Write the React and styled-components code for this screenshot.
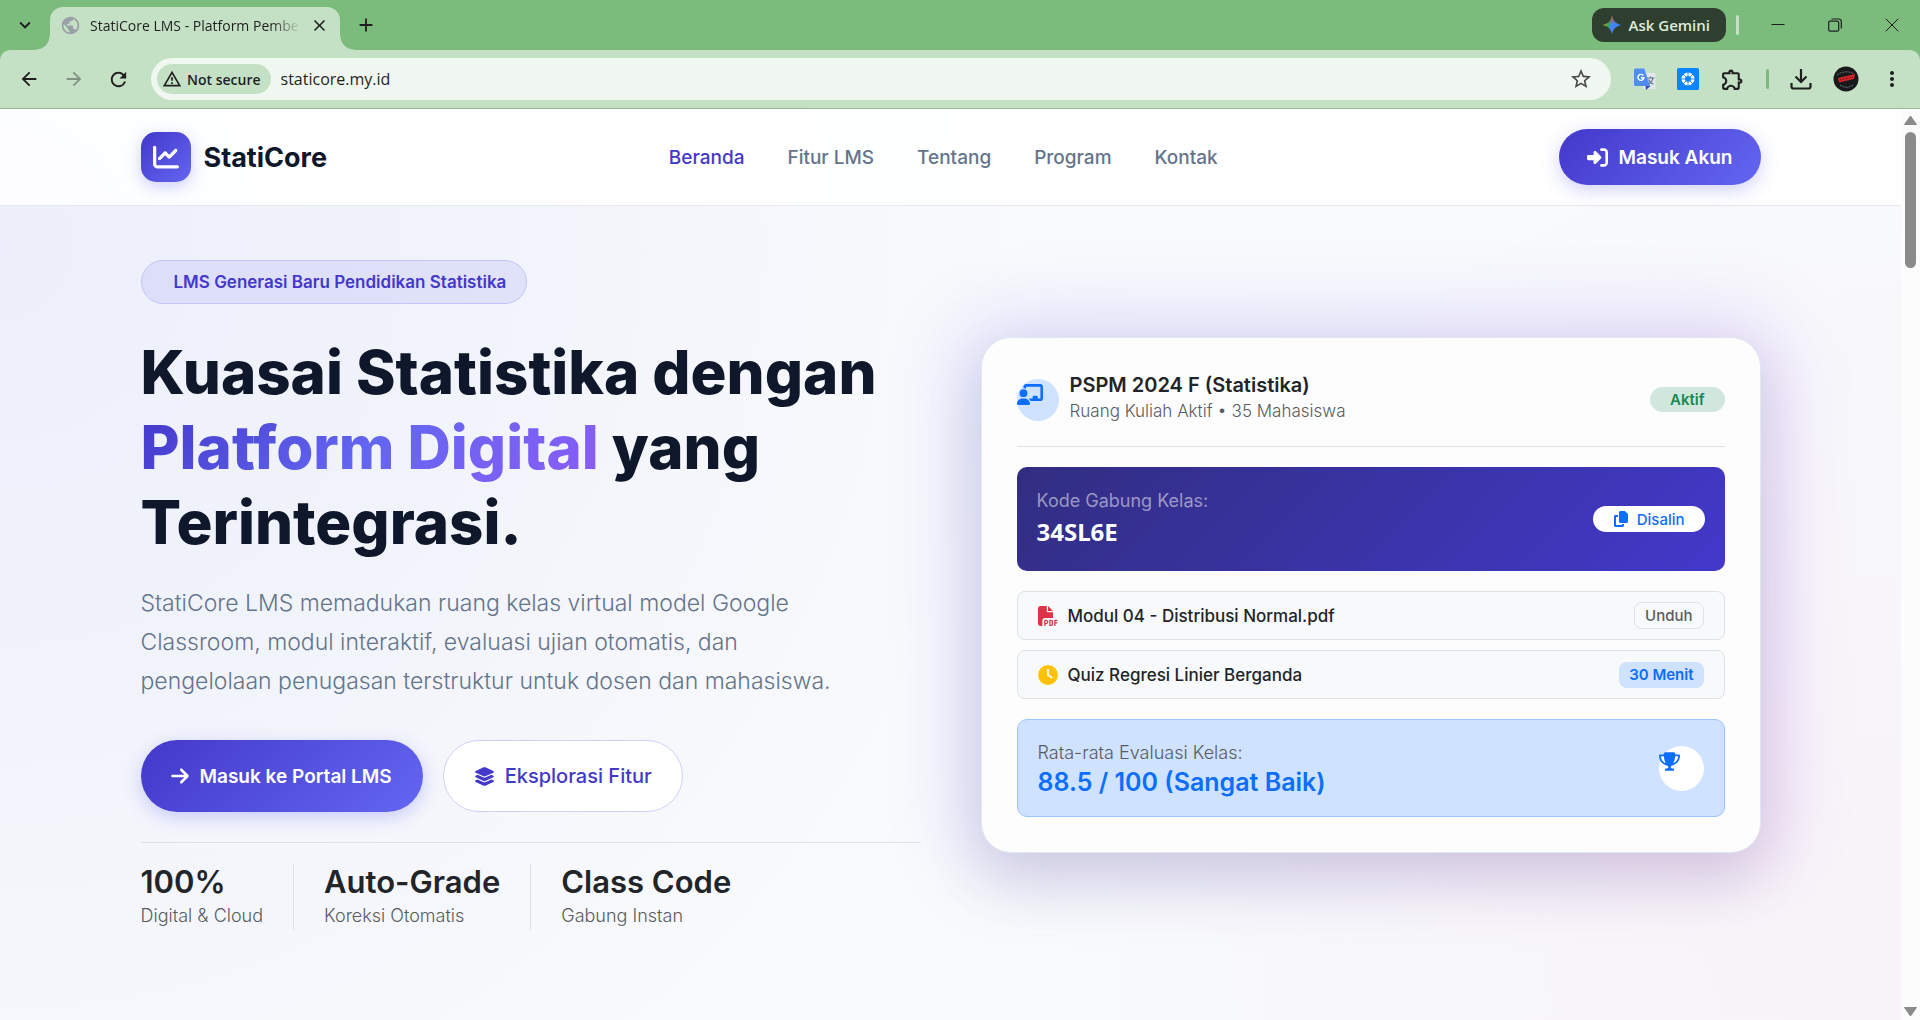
import React from 'react';
import styled, { createGlobalStyle } from 'styled-components';
import {
  FaChartLine,
  FaRightToBracket,
  FaArrowRight,
  FaLayerGroup,
  FaCopy,
  FaChalkboardUser,
  FaFilePdf,
  FaClock,
  FaTrophy,
} from 'react-icons/fa6';
import {
  MdPublic,
  MdClose,
  MdAdd,
  MdArrowBack,
  MdArrowForward,
  MdRefresh,
  MdStarBorder,
  MdMoreVert,
  MdOutlineWarningAmber,
  MdKeyboardArrowDown,
  MdOutlineExtension,
} from 'react-icons/md';

const menus = ['Beranda', 'Fitur LMS', 'Tentang', 'Program', 'Kontak'];

const stats = [
  { value: '100%', label: 'Digital & Cloud' },
  { value: 'Auto-Grade', label: 'Koreksi Otomatis' },
  { value: 'Class Code', label: 'Gabung Instan' },
];

const BrowserBar = () => {
  return (
    <Browser>
      <TabStrip>
        <TabSearch aria-label="Cari tab"><MdKeyboardArrowDown size={22} /></TabSearch>
        <Tab>
          <MdPublic size={21} color="#9aa0a6" />
          <TabTitle>StatiCore LMS - Platform Pembe</TabTitle>
          <TabClose aria-label="Tutup tab"><MdClose size={19} /></TabClose>
        </Tab>
        <NewTab aria-label="Tab baru"><MdAdd size={22} /></NewTab>
        <WindowTools>
          <Gemini>
            <GeminiIcon />
            Ask Gemini
          </Gemini>
          <Divider $color="#c5e1c5" />
          <WindowButtons>
            <WindowButton aria-label="Minimize">
              <svg width="14" height="14" viewBox="0 0 14 14" stroke="#1f1f1f"><path d="M.5 6.5h13" /></svg>
            </WindowButton>
            <WindowButton aria-label="Restore">
              <svg width="14" height="14" viewBox="0 0 14 14" fill="none" stroke="#1f1f1f" strokeWidth="1.2">
                <rect x=".7" y="3.2" width="10" height="10" rx="1.5" />
                <path d="M3.5 1h7.2a2.6 2.6 0 0 1 2.6 2.6v7" />
              </svg>
            </WindowButton>
            <WindowButton aria-label="Close">
              <svg width="14" height="14" viewBox="0 0 14 14" stroke="#1f1f1f"><path d="M.7.7l12.6 12.6M13.3.7L.7 13.3" /></svg>
            </WindowButton>
          </WindowButtons>
        </WindowTools>
      </TabStrip>

      <Toolbar>
        <ToolButton aria-label="Kembali"><MdArrowBack size={22} /></ToolButton>
        <ToolButton aria-label="Maju" $off><MdArrowForward size={22} /></ToolButton>
        <ToolButton aria-label="Muat ulang"><MdRefresh size={23} /></ToolButton>
        <AddressBar>
          <Security><MdOutlineWarningAmber size={20} />Not secure</Security>
          <Address aria-label="Alamat" defaultValue="staticore.my.id" />
          <BareButton aria-label="Bookmark"><MdStarBorder size={24} color="#474747" /></BareButton>
        </AddressBar>
        <Extensions>
          <BareButton aria-label="Translate"><TranslateIcon /></BareButton>
          <BareButton aria-label="Shutter"><ShutterIcon /></BareButton>
          <BareButton aria-label="Ekstensi"><MdOutlineExtension size={25} /></BareButton>
          <Divider $color="#7bbb7c" />
          <BareButton aria-label="Download">
            <svg width="22" height="22" viewBox="0 0 22 22" fill="none" stroke="#1f1f1f" strokeWidth="2.2">
              <path d="M11 1v12.500M5.500 8.500l5.500 5.500 5.500-5.500M1.500 15v3.500a2 2 0 0 0 2 2h15a2 2 0 0 0 2-2V15" />
            </svg>
          </BareButton>
          <BareButton aria-label="Profil"><AvatarIcon /></BareButton>
          <BareButton aria-label="Menu"><MdMoreVert size={24} /></BareButton>
        </Extensions>
      </Toolbar>
    </Browser>
  );
};

const GeminiIcon = () => (
  <svg width="20" height="20" viewBox="0 0 20 20">
    <defs>
      <linearGradient id="gem" x1="0" y1=".3" x2="1" y2=".6">
        <stop offset="0" stopColor="#fbbc04" />
        <stop offset=".32" stopColor="#34a853" />
        <stop offset=".5" stopColor="#4285f4" />
        <stop offset="1" stopColor="#3b82f6" />
      </linearGradient>
      <linearGradient id="gemTop" x1="0" y1="0" x2="0" y2="1">
        <stop offset="0" stopColor="#ea4335" />
        <stop offset=".45" stopColor="#ea4335" stopOpacity="0" />
      </linearGradient>
    </defs>
    <path d="M10 .5c1 5.500 4 8.500 9.500 9.500-5.500 1-8.500 4-9.500 9.500C9 14 6 11 .5 10 6 9 9 6 10 .5z" fill="url(#gem)" />
    <path d="M10 .5c1 5.500 4 8.500 9.500 9.500-5.500 1-8.500 4-9.500 9.500C9 14 6 11 .5 10 6 9 9 6 10 .5z" fill="url(#gemTop)" />
  </svg>
);

const TranslateIcon = () => (
  <svg width="22" height="22" viewBox="0 0 22 22" fill="none">
    <rect x="9" y="5" width="12.500" height="16" rx="1.500" fill="#e3e6ea" />
    <path d="M13 10h7.500M16.700 8.500V10M19 10c-.6 3-2.500 5-5 6.300M14.500 11.500c.8 2 2.500 3.800 5 4.800" stroke="#5f7186" strokeWidth="1.200" />
    <path d="M11.500 18h5l-4.500 4z" fill="#3a49b8" />
    <path d="M1.500.5h8.800L16 18H1.500A1.500 1.500 0 0 1 0 16.500V2A1.500 1.500 0 0 1 1.500.5z" fill="#4f8df5" />
    <path d="M9.300 7.500A3 3 0 1 0 9.900 9.700H7" stroke="#fff" strokeWidth="1.400" />
  </svg>
);

const ShutterIcon = () => (
  <svg width="22" height="22" viewBox="0 0 22 22">
    <rect width="22" height="22" rx="1.500" fill="#0a84ff" />
    <circle cx="11" cy="11" r="6.500" fill="#fff" />
    <path
      d="M11 4v4M11 14v4M4 11h4M14 11h4M6 6l3 3M13 13l3 3M6 16l3-3M13 9l3-3"
      stroke="#0a84ff"
      strokeWidth=".9"
    />
    <circle cx="11" cy="11" r="3" fill="#0a84ff" />
  </svg>
);

const AvatarIcon = () => (
  <svg width="26" height="26" viewBox="0 0 26 26">
    <circle cx="13" cy="13" r="12.500" fill="#17191b" />
    <path d="M4 9c5-4 13-4 17-1M7 19c4 3 9 3 13 0" stroke="#6e7275" fill="none" strokeDasharray="2 1" />
    <path d="M5 12l17-4-1 5-15 3.500z" fill="#d3262b" />
    <path d="M7 14l13-3" stroke="#7d1417" strokeDasharray="2 1" />
  </svg>
);

const Header = () => {
  return (
    <HeaderWrap>
      <HeaderInner>
        <Brand href="#beranda">
          <Logo><FaChartLine size={26} /></Logo>
          StatiCore
        </Brand>
        <Nav>
          {menus.map((menu, i) => (
            <NavLink key={menu} href={'#' + menu} $active={i === 0}>{menu}</NavLink>
          ))}
        </Nav>
        <LoginButton>
          <FaRightToBracket size={21} />
          Masuk Akun
        </LoginButton>
      </HeaderInner>
    </HeaderWrap>
  );
};

const Intro = () => {
  return (
    <IntroWrap>
      <Pill>LMS Generasi Baru Pendidikan Statistika</Pill>
      <Title>
        Kuasai Statistika dengan<br />
        <em>Platform Digital</em> yang<br />
        Terintegrasi.
      </Title>
      <Lead>
        StatiCore LMS memadukan ruang kelas virtual model Google<br />
        Classroom, modul interaktif, evaluasi ujian otomatis, dan<br />
        pengelolaan penugasan terstruktur untuk dosen dan mahasiswa.
      </Lead>
      <Actions>
        <PortalButton><FaArrowRight size={20} />Masuk ke Portal LMS</PortalButton>
        <FeatureButton><FaLayerGroup size={21} />Eksplorasi Fitur</FeatureButton>
      </Actions>
      <Stats>
        {stats.map((stat) => (
          <Stat key={stat.label}>
            <strong>{stat.value}</strong>
            <span>{stat.label}</span>
          </Stat>
        ))}
      </Stats>
    </IntroWrap>
  );
};

const ClassCard = () => {
  return (
    <CardArea>
      <Glow />
      <Card>
        <CardHead>
          <RoomIcon><FaChalkboardUser size={21} /></RoomIcon>
          <RoomInfo>
            <h2>PSPM 2024 F (Statistika)</h2>
            <p>Ruang Kuliah Aktif • 35 Mahasiswa</p>
          </RoomInfo>
          <StatusBadge>Aktif</StatusBadge>
        </CardHead>

        <CodeBox>
          <div>
            <p>Kode Gabung Kelas:</p>
            <Code>34SL6E</Code>
          </div>
          <CopyButton><FaCopy size={16} />Disalin</CopyButton>
        </CodeBox>

        <Files>
          <FileRow>
            <FaFilePdf size={20} color="#dc3545" />
            <span>Modul 04 - Distribusi Normal.pdf</span>
            <DownloadButton>Unduh</DownloadButton>
          </FileRow>
          <FileRow>
            <FaClock size={20} color="#ffc107" />
            <span>Quiz Regresi Linier Berganda</span>
            <TimeBadge>30 Menit</TimeBadge>
          </FileRow>
        </Files>

        <ScoreBox>
          <div>
            <p>Rata-rata Evaluasi Kelas:</p>
            <strong>88.5 / 100 (Sangat Baik)</strong>
          </div>
          <TrophyIcon><FaTrophy size={21} /></TrophyIcon>
        </ScoreBox>
      </Card>
    </CardArea>
  );
};

const App = () => {
  return (
    <>
      <GlobalStyle />
      <Screen>
        <BrowserBar />
        <Viewport>
          <Page>
            <Header />
            <Hero>
              <Intro />
              <ClassCard />
            </Hero>
          </Page>
          <ScrollBar>
            <svg width="13" height="11" viewBox="0 0 13 11"><path d="M6.500 1l6 8.500H.5z" fill="#8b8b8b" stroke="#8b8b8b" strokeLinejoin="round" /></svg>
            <Thumb />
            <svg width="13" height="11" viewBox="0 0 13 11"><path d="M6.500 10l6-8.500H.5z" fill="#8b8b8b" stroke="#8b8b8b" strokeLinejoin="round" /></svg>
          </ScrollBar>
        </Viewport>
      </Screen>
    </>
  );
};

const GlobalStyle = createGlobalStyle`
  *{
    box-sizing: border-box;
  }
  body{
    margin: 0;
    color: #212529;
    font-family: Inter, "Liberation Sans", sans-serif;
  }
  button{
    font-family: inherit;
    border: 0;
    cursor: pointer;
  }
  h1, h2, p{
    margin: 0;
  }
  svg{
    flex: none;
  }
`;

const Screen = styled.div`
  display: flex;
  flex-direction: column;
  height: 100vh;
  overflow: hidden;
`;

/* browser */
const Browser = styled.header`
  background-color: #7bbb7c;
  color: #1f1f1f;
  font-family: "Open Sans", "Noto Sans", sans-serif;
  border-bottom: 1px solid #9db89d;
`;

const TabStrip = styled.div`
  display: flex;
  align-items: center;
  height: 50px;
`;

const BareButton = styled.button`
  display: flex;
  align-items: center;
  justify-content: center;
  padding: 0;
  background: none;
  color: inherit;
`;

const TabSearch = styled(BareButton)`
  width: 50px;
`;

const Tab = styled.div`
  position: relative;
  display: flex;
  align-items: center;
  align-self: flex-end;
  gap: 9px;
  width: 290px;
  height: 43px;
  padding: 0 11px 6px 10px;
  border-radius: 13px 13px 0 0;
  background-color: #c5e1c5;

  /* flared feet of the tab */
  &::before, &::after{
    content: "";
    position: absolute;
    bottom: 0;
    width: 14px;
    height: 14px;
  }
  &::before{
    right: 100%;
    background: radial-gradient(circle at 0 0, transparent 13px, #c5e1c5 14px);
  }
  &::after{
    left: 100%;
    background: radial-gradient(circle at 100% 0, transparent 13px, #c5e1c5 14px);
  }
`;

const TabTitle = styled.span`
  flex: 1;
  white-space: nowrap;
  font-size: 14px;
  mask-image: linear-gradient(90deg, #000 86%, transparent);
`;

const TabClose = styled(BareButton)`
  width: 19px;
`;

const NewTab = styled(BareButton)`
  width: 52px;
`;

const WindowTools = styled.div`
  display: flex;
  align-items: center;
  margin-left: auto;
`;

const Gemini = styled.button`
  display: flex;
  align-items: center;
  gap: 7px;
  height: 34px;
  margin-right: 10px;
  padding: 0 16px 0 10px;
  border-radius: 12px;
  background-color: #2f3f2f;
  color: #dcebdc;
  font-size: 15px;
  font-weight: 600;
`;

const Divider = styled.span`
  width: 3px;
  height: 20px;
  border-radius: 2px;
  background-color: ${(props) => props.$color};
`;

const WindowButtons = styled.div`
  display: flex;
  padding-left: 10px;
`;

const WindowButton = styled(BareButton)`
  width: 57px;
  height: 50px;
`;

const Toolbar = styled.div`
  display: flex;
  align-items: center;
  height: 58px;
  padding: 0 16px 0 6px;
  border-radius: 10px 10px 0 0;
  background-color: #c5e1c5;
`;

const ToolButton = styled(BareButton)`
  width: 45px;
  opacity: ${(props) => (props.$off ? 0.4 : 1)};
`;

const AddressBar = styled.div`
  display: flex;
  align-items: center;
  flex: 1;
  gap: 10px;
  height: 42px;
  margin-left: 10px;
  padding: 0 18px 0 6px;
  border-radius: 21px;
  background-color: #f0f7f0;
`;

const Security = styled.button`
  display: flex;
  align-items: center;
  gap: 5px;
  height: 30px;
  padding: 0 10px 0 5px;
  border-radius: 15px;
  background-color: #c5e1c5;
  color: #1f1f1f;
  font-size: 14px;
  font-weight: 600;
`;

const Address = styled.input`
  flex: 1;
  min-width: 0;
  padding: 0;
  border: 0;
  outline: 0;
  background: none;
  color: #1f1f1f;
  font-family: inherit;
  font-size: 16px;
`;

const Extensions = styled.div`
  display: flex;
  align-items: center;
  gap: 21px;
  padding-left: 23px;
`;

/* page */
const Viewport = styled.div`
  display: flex;
  flex: 1;
  min-height: 0;
`;

const Page = styled.div`
  flex: 1;
  min-width: 0;
  overflow: hidden;
  background:
    radial-gradient(circle at 0% 15%, rgba(99, 102, 241, 0.08), transparent 50%),
    radial-gradient(circle at 100% 90%, rgba(236, 72, 153, 0.04), transparent 40%),
    #f8fafc;
`;

const ScrollBar = styled.div`
  display: flex;
  flex-direction: column;
  align-items: center;
  width: 19px;
  padding: 6px 0 3px;
  background-color: #fcfcfc;

  svg:last-child{
    margin-top: auto;
  }
`;

const Thumb = styled.div`
  width: 11px;
  height: 136px;
  margin-top: 6px;
  border-radius: 6px;
  background-color: #8b8b8b;
`;

const HeaderWrap = styled.div`
  background-color: rgba(255, 255, 255, 0.88);
  border-bottom: 1px solid #e6e9f0;
`;

const HeaderInner = styled.div`
  display: flex;
  align-items: center;
  justify-content: space-between;
  max-width: 1620px;
  height: 96px;
  margin: 0 auto;
`;

const Brand = styled.a`
  display: flex;
  align-items: center;
  gap: 13px;
  color: #0f172a;
  font-size: 27px;
  font-weight: 700;
  text-decoration: none;
`;

const Logo = styled.span`
  display: flex;
  align-items: center;
  justify-content: center;
  width: 50px;
  height: 50px;
  border-radius: 15px;
  background: linear-gradient(135deg, #4338ca, #6366f1);
  color: white;
  box-shadow: 0 5px 15px rgba(99, 102, 241, 0.3);
`;

const Nav = styled.nav`
  display: flex;
  gap: 43px;
`;

const NavLink = styled.a`
  color: ${(props) => (props.$active ? '#4338ca' : '#64748b')};
  font-size: 19px;
  font-weight: 500;
  text-decoration: none;
`;

const PrimaryButton = styled.button`
  display: flex;
  align-items: center;
  gap: 10px;
  border-radius: 36px;
  background: linear-gradient(135deg, #4338ca, #6366f1);
  color: white;
  font-weight: 600;
  box-shadow: 0 5px 18px rgba(99, 102, 241, 0.3);
`;

const LoginButton = styled(PrimaryButton)`
  height: 56px;
  padding: 0 28px;
  font-size: 19px;
`;

const Hero = styled.main`
  display: grid;
  grid-template-columns: 1fr 1fr;
  align-items: center;
  gap: 60px;
  max-width: 1620px;
  margin: 0 auto;
  padding-top: 54px;
`;

const IntroWrap = styled.section`
  display: flex;
  flex-direction: column;
  align-items: flex-start;
`;

const Pill = styled.span`
  display: flex;
  align-items: center;
  height: 44px;
  padding: 0 20px 0 32px;
  border: 1px solid #c4c3f8;
  border-radius: 22px;
  background-color: rgba(99, 102, 241, 0.12);
  color: #4338ca;
  font-size: 17px;
  font-weight: 600;
`;

const Title = styled.h1`
  margin-top: 31px;
  color: #0f172a;
  font-size: 60px;
  font-weight: 800;
  line-height: 75px;
  white-space: nowrap;

  em{
    font-style: normal;
    background: linear-gradient(135deg, #4338ca, #6366f1 50%, #8b5cf6);
    background-clip: text;
    color: transparent;
  }
`;

const Lead = styled.p`
  margin-top: 24px;
  color: #64748b;
  font-size: 23px;
  font-weight: 300;
  line-height: 39px;
  white-space: nowrap;
`;

const Actions = styled.div`
  display: flex;
  gap: 20px;
  margin-top: 39px;
`;

const PortalButton = styled(PrimaryButton)`
  height: 72px;
  padding: 0 31px 0 29px;
  font-size: 19px;
`;

const FeatureButton = styled(PrimaryButton)`
  height: 72px;
  padding: 0 30px;
  border: 1px solid #d0d0fb;
  background: white;
  color: #4338ca;
  font-size: 20px;
  font-weight: 500;
  box-shadow: none;
`;

const Stats = styled.div`
  display: flex;
  align-self: stretch;
  margin-top: 30px;
  padding-top: 20px;
  border-top: 1px solid #dee2e6;
`;

const Stat = styled.div`
  display: flex;
  flex-direction: column;
  height: 67px;
  padding-right: 30px;

  strong{
    font-size: 31px;
    font-weight: 600;
    line-height: 38px;
  }
  span{
    color: #585c60;
    font-size: 18px;
    font-weight: 300;
    line-height: 29px;
  }
  & + &{
    padding-left: 30px;
    border-left: 1px solid #dee2e6;
  }
`;

/* class card */
const CardArea = styled.section`
  position: relative;
`;

const Glow = styled.div`
  position: absolute;
  inset: -22px;
  border-radius: 50px;
  background: linear-gradient(135deg, #6366f1, #8b5cf6 60%, #c04fe8);
  opacity: 0.19;
  filter: blur(38px);
`;

const Card = styled.div`
  position: relative;
  display: flex;
  flex-direction: column;
  gap: 20px;
  padding: 35px;
  border: 1px solid #e2e8f0;
  border-radius: 30px;
  background-color: #fdfdfe;
  box-shadow: 0 25px 60px rgba(15, 23, 42, 0.12);
`;

const CardHead = styled.div`
  display: flex;
  align-items: center;
  gap: 11px;
  padding-bottom: 20px;
  border-bottom: 1px solid #dee2e6;
`;

const RoomIcon = styled.span`
  width: 42px;
  height: 42px;
  border-radius: 50%;
  background-color: #cfe2ff;
  color: #0d6efd;

  svg{
    display: block;
    width: 26px;
    margin-top: 5px;
  }
`;

const RoomInfo = styled.div`
  flex: 1;

  h2{
    font-size: 20px;
    font-weight: 600;
    line-height: 24px;
  }
  p{
    color: #585c60;
    font-size: 17px;
    font-weight: 300;
    line-height: 29px;
  }
`;

const StatusBadge = styled.span`
  padding: 0 20px;
  border-radius: 13px;
  background-color: #d1e7dd;
  color: #198754;
  font-size: 15px;
  font-weight: 600;
  line-height: 25px;
`;

const CodeBox = styled.div`
  display: flex;
  align-items: center;
  justify-content: space-between;
  padding: 20px;
  border-radius: 10px;
  background: linear-gradient(135deg, #312e81, #4338ca);

  p{
    color: rgba(255, 255, 255, 0.5);
    font-size: 18px;
    line-height: 28px;
  }
`;

const Code = styled.code`
  display: block;
  padding-bottom: 2px;
  color: white;
  font-family: "Noto Sans", "Open Sans", sans-serif;
  font-size: 24px;
  font-weight: 700;
  line-height: 34px;
`;

const CopyButton = styled.button`
  display: flex;
  align-items: center;
  gap: 8px;
  height: 26px;
  padding: 0 20px;
  border-radius: 13px;
  background-color: white;
  color: #0d6efd;
  font-size: 15px;
  font-weight: 500;
`;

const Files = styled.div`
  display: flex;
  flex-direction: column;
  gap: 10px;
`;

const FileRow = styled.div`
  display: flex;
  align-items: center;
  gap: 10px;
  height: 49px;
  padding: 0 20px;
  border: 1px solid #dee2e6;
  border-radius: 8px;
  background-color: #f8f9fb;

  span:nth-child(2){
    flex: 1;
    font-size: 17px;
    font-weight: 500;
  }
`;

const DownloadButton = styled.button`
  height: 27px;
  padding: 0 10px;
  border: 1px solid #dee2e6;
  border-radius: 8px;
  background-color: #f8f9fa;
  color: #585c60;
  font-size: 15px;
  font-weight: 500;
`;

const TimeBadge = styled.span`
  padding: 0 10px;
  border-radius: 8px;
  background-color: #cfe2ff;
  color: #0d6efd;
  font-size: 15px;
  font-weight: 600;
  line-height: 26px;
`;

const ScoreBox = styled.div`
  display: flex;
  align-items: center;
  justify-content: space-between;
  padding: 19px 20px;
  border: 1px solid #9ec5fe;
  border-radius: 10px;
  background-color: #cfe2ff;

  p{
    color: #585c60;
    font-size: 18px;
    font-weight: 300;
    line-height: 28px;
  }
  strong{
    display: block;
    color: #0d6efd;
    font-size: 25px;
    font-weight: 600;
    line-height: 30px;
  }
`;

const TrophyIcon = styled.span`
  width: 45px;
  height: 45px;
  border-radius: 50%;
  background-color: white;
  color: #0d6efd;

  svg{
    display: block;
    margin-top: 5px;
  }
`;

export default App;
